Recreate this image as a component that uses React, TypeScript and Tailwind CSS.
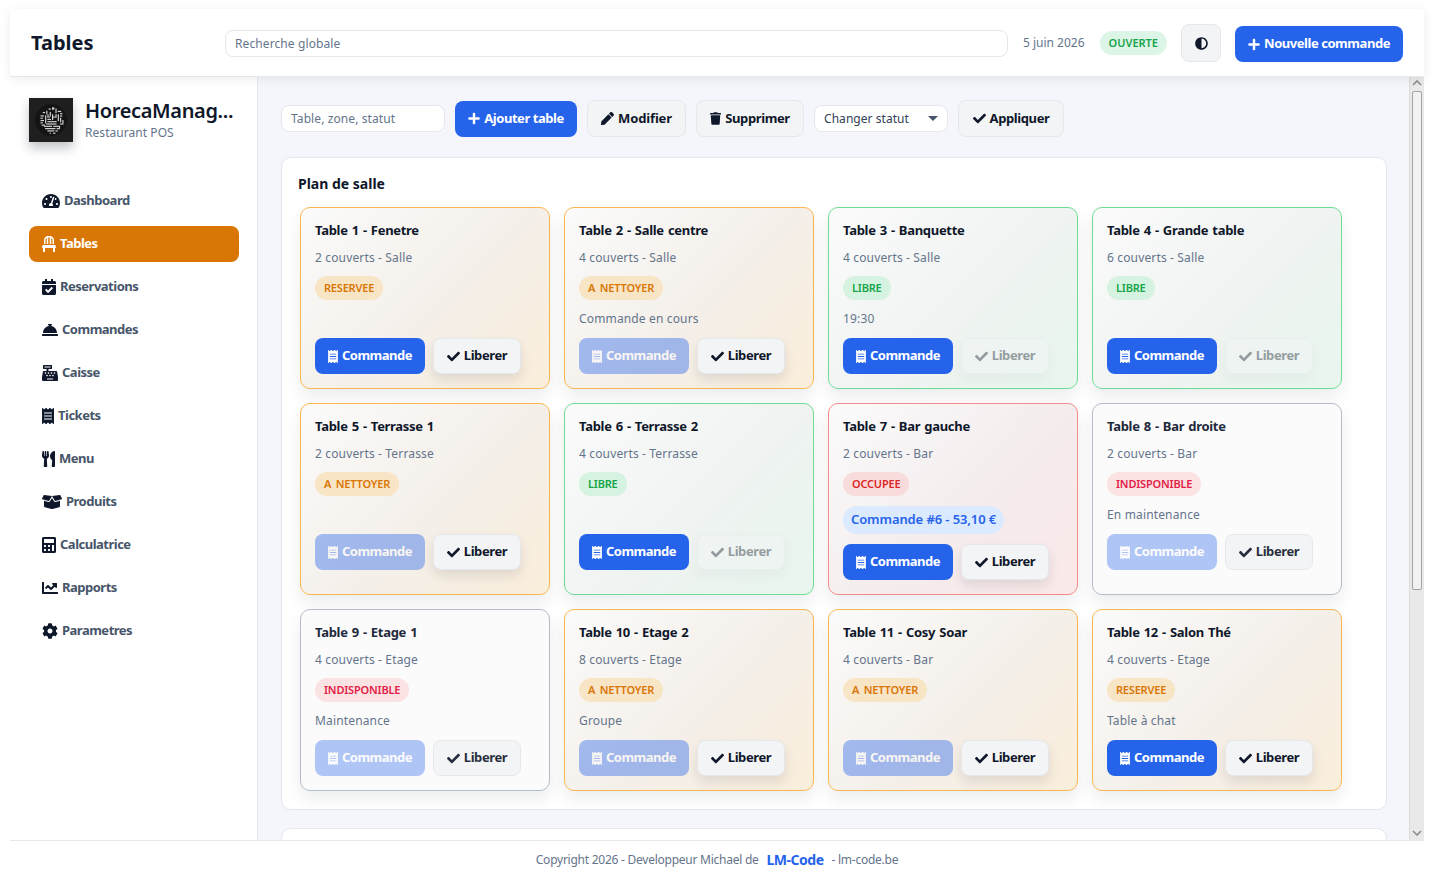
import {
  FaTachometerAlt,
  FaChair,
  FaCalendarCheck,
  FaConciergeBell,
  FaCashRegister,
  FaReceipt,
  FaUtensils,
  FaBoxOpen,
  FaCalculator,
  FaChartLine,
  FaCog,
  FaAdjust,
  FaPlus,
  FaPen,
  FaTrash,
  FaCheck,
} from 'react-icons/fa';

const navigation = [
  { name: 'Dashboard', icon: FaTachometerAlt, size: 'h-4 w-[18px]' },
  { name: 'Tables', icon: FaChair, size: 'h-4 w-[14px]', active: true },
  { name: 'Reservations', icon: FaCalendarCheck, size: 'h-4 w-[14px]' },
  { name: 'Commandes', icon: FaConciergeBell, size: 'h-4 w-4' },
  { name: 'Caisse', icon: FaCashRegister, size: 'h-4 w-4' },
  { name: 'Tickets', icon: FaReceipt, size: 'h-4 w-3' },
  { name: 'Menu', icon: FaUtensils, size: 'h-4 w-[13px]' },
  { name: 'Produits', icon: FaBoxOpen, size: 'h-4 w-5' },
  { name: 'Calculatrice', icon: FaCalculator, size: 'h-4 w-[14px]' },
  { name: 'Rapports', icon: FaChartLine, size: 'h-4 w-4' },
  { name: 'Parametres', icon: FaCog, size: 'h-4 w-4' },
];

type Status = 'RESERVEE' | 'A NETTOYER' | 'LIBRE' | 'OCCUPEE' | 'INDISPONIBLE';

const cardStyles: Record<Status, string> = {
  RESERVEE: 'border-[#fbb64f] bg-[linear-gradient(135deg,#fbfbfb_0%,#f4efe9_55%,#faeedb_100%)]',
  'A NETTOYER': 'border-[#fbb64f] bg-[linear-gradient(135deg,#fbfbfb_0%,#f4efe9_55%,#faeedb_100%)]',
  LIBRE: 'border-[#6fdc96] bg-[linear-gradient(135deg,#fbfbfb_0%,#eff3f1_55%,#e8f6ed_100%)]',
  OCCUPEE: 'border-[#f68a8a] bg-[linear-gradient(135deg,#fbfbfb_0%,#f4eced_55%,#fbe9e9_100%)]',
  INDISPONIBLE: 'border-[#b4bcc8] bg-[#fbfbfc]',
};

const badgeStyles: Record<Status, string> = {
  RESERVEE: 'bg-[#f8e5c6] text-[#d97706]',
  'A NETTOYER': 'bg-[#f8e5c6] text-[#d97706]',
  LIBRE: 'bg-[#d5f3e0] text-[#16a34a]',
  OCCUPEE: 'bg-[#f8dcdc] text-[#dc2626]',
  INDISPONIBLE: 'bg-[#fbe2e3] text-[#e11d48]',
};

interface TableData {
  name: string;
  zone: string;
  seats: string;
  status: Status;
  note?: string;
  order?: string;
  canOrder?: boolean;
}

const tables: TableData[] = [
  { name: 'Table 1', zone: 'Fenetre', seats: '2 couverts - Salle', status: 'RESERVEE', canOrder: true },
  { name: 'Table 2', zone: 'Salle centre', seats: '4 couverts - Salle', status: 'A NETTOYER', note: 'Commande en cours' },
  { name: 'Table 3', zone: 'Banquette', seats: '4 couverts - Salle', status: 'LIBRE', note: '19:30', canOrder: true },
  { name: 'Table 4', zone: 'Grande table', seats: '6 couverts - Salle', status: 'LIBRE', canOrder: true },
  { name: 'Table 5', zone: 'Terrasse 1', seats: '2 couverts - Terrasse', status: 'A NETTOYER' },
  { name: 'Table 6', zone: 'Terrasse 2', seats: '4 couverts - Terrasse', status: 'LIBRE', canOrder: true },
  { name: 'Table 7', zone: 'Bar gauche', seats: '2 couverts - Bar', status: 'OCCUPEE', order: 'Commande #6 - 53,10 €', canOrder: true },
  { name: 'Table 8', zone: 'Bar droite', seats: '2 couverts - Bar', status: 'INDISPONIBLE', note: 'En maintenance' },
  { name: 'Table 9', zone: 'Etage 1', seats: '4 couverts - Etage', status: 'INDISPONIBLE', note: 'Maintenance' },
  { name: 'Table 10', zone: 'Etage 2', seats: '8 couverts - Etage', status: 'A NETTOYER', note: 'Groupe' },
  { name: 'Table 11', zone: 'Cosy Soar', seats: '4 couverts - Bar', status: 'A NETTOYER' },
  { name: 'Table 12', zone: 'Salon Thé', seats: '4 couverts - Etage', status: 'RESERVEE', note: 'Table à chat', canOrder: true },
];

// speckled circuit mark of the logo
const logoMarks = [
  [14, 15, 2, 1], [17, 14, 1, 3], [19, 12, 2, 1], [22, 11, 2, 2], [25, 12, 1, 4], [27, 14, 3, 1],
  [29, 16, 2, 1], [12, 18, 3, 1], [12, 20, 2, 1], [12, 22, 3, 1], [12, 24, 2, 1], [13, 26, 3, 1],
  [16, 18, 1, 7], [18, 17, 1, 3], [20, 15, 1, 4], [22, 17, 1, 5], [23, 19, 2, 1], [25, 17, 1, 3],
  [27, 17, 1, 6], [29, 18, 2, 1], [29, 20, 1, 4], [31, 22, 1, 3], [29, 25, 3, 1], [18, 21, 3, 1],
  [18, 23, 8, 1], [17, 25, 9, 1], [15, 27, 7, 1], [23, 27, 5, 1], [16, 29, 9, 1], [26, 29, 3, 1],
  [18, 31, 6, 1], [25, 31, 2, 1], [20, 33, 1, 1], [23, 33, 2, 1], [19, 19, 1, 1], [28, 27, 1, 2],
];

function Logo() {
  return (
    <div className="w-11 h-11 shrink-0 bg-[#1f1f1f] shadow-[0_6px_10px_rgba(15,23,42,0.25)]">
      <svg viewBox="0 0 44 44" className="w-11 h-11">
        <circle cx="22" cy="22" r="16" fill="#141414" />
        <g fill="#d6d6d6" transform="translate(-2.3 -3.3) scale(1.15)">
          {logoMarks.map(([x, y, w, h], i) => (
            <rect key={i} x={x} y={y} width={w} height={h} />
          ))}
        </g>
      </svg>
    </div>
  );
}

function Sidebar() {
  return (
    <aside className="w-[248px] shrink-0 bg-white border-r border-[#e5e7eb] pl-[19px] pr-[18px] pt-[21px]">
      <div className="flex items-center gap-3 h-11">
        <Logo />
        <div className="min-w-0 flex-1">
          <p className="mb-[2px] text-[20px] leading-6 font-semibold tracking-[-0.35px] text-[#0f172a] whitespace-nowrap">HorecaManag...</p>
          <p className="text-[12px] leading-4 tracking-[0.05px] text-[#64748b]">Restaurant POS</p>
        </div>
      </div>
      <nav className="mt-[41px] flex flex-col gap-[7px]">
        {navigation.map((item) => (
          <a
            key={item.name}
            className={
              item.active
                ? 'flex items-center gap-1 h-9 pl-[13px] rounded-lg bg-[#d97706] text-white text-[13px] font-bold tracking-[-0.5px]'
                : 'flex items-center gap-1 h-9 pl-[13px] rounded-lg text-[#475569] text-[13px] font-bold tracking-[-0.5px]'
            }
          >
            <item.icon className={`${item.size} ${item.active ? 'text-white' : 'text-[#0f172a]'}`} />
            <span>{item.name}</span>
          </a>
        ))}
      </nav>
    </aside>
  );
}

function TableCard({ table }: { table: TableData }) {
  const muted = table.status === 'INDISPONIBLE';
  const free = table.status === 'LIBRE';
  return (
    <div className={`rounded-[10px] border p-[14px] shadow-[0_8px_16px_rgba(15,23,42,0.08)] ${cardStyles[table.status]}`}>
      <p className={`text-[13px] leading-4 font-bold tracking-[-0.3px] [word-spacing:1px] ${muted ? 'text-[#1e293b]' : 'text-[#0f172a]'}`}>
        {table.name} - {table.zone}
      </p>
      <p className="mt-[11px] text-[12px] leading-[18px] tracking-[0.15px] text-[#64748b]">{table.seats}</p>
      <span
        className={`mt-[9px] inline-flex items-center h-6 px-[9px] rounded-full text-[11px] font-semibold tracking-[-0.2px] [word-spacing:2px] ${badgeStyles[table.status]}`}
      >
        {table.status}
      </span>
      {table.order ? (
        <div className="mt-[10px] h-7">
          <span className="inline-flex items-center h-7 px-2 rounded-full bg-[#dbeafe] text-[#2563eb] text-[13px] font-semibold tracking-[-0.1px]">{table.order}</span>
        </div>
      ) : (
        <p className="mt-[10px] min-h-[18px] text-[12px] leading-[18px] tracking-[0.15px] text-[#64748b]">{table.note}</p>
      )}
      <div className="mt-[10px] flex gap-2">
        <button
          className={`flex items-center gap-1 h-9 w-[110px] justify-center rounded-lg bg-[#2563eb] text-white text-[13px] font-bold tracking-[-0.5px] ${
            table.canOrder ? '' : muted ? 'opacity-35' : 'opacity-40'
          }`}
        >
          <FaReceipt className="h-[13px] w-[10px]" />
          Commande
        </button>
        <button
          className={`flex items-center gap-1 h-9 w-[88px] justify-center rounded-lg border border-[#e5e7eb] bg-[#f3f4f6] text-[#0f172a] text-[13px] font-bold tracking-[-0.4px] ${
            free ? 'opacity-40 shadow-[0_6px_12px_rgba(15,23,42,0.08)]' : muted ? 'opacity-90' : 'shadow-[0_6px_12px_rgba(15,23,42,0.1)]'
          }`}
        >
          <FaCheck className="h-[13px] w-[13px]" />
          Liberer
        </button>
      </div>
    </div>
  );
}

function FakeScrollbar() {
  return (
    <div className="w-[15px] shrink-0 flex flex-col items-center pr-px bg-[#e9e9e9] border-l border-[#dcdcdc]">
      <svg viewBox="0 0 10 6" className="mt-[3px] w-[10px] h-[6px]">
        <path d="M1 5l4-4 4 4" fill="none" stroke="#8c8c8c" strokeWidth="1.6" />
      </svg>
      <div className="mt-[5px] w-[10px] h-[499px] rounded-[2px] border border-[#a3a3a3] bg-[#f1f1f1]" />
      <svg viewBox="0 0 10 6" className="mt-auto mb-1 w-[10px] h-[6px]">
        <path d="M1 1l4 4 4-4" fill="none" stroke="#8c8c8c" strokeWidth="1.6" />
      </svg>
    </div>
  );
}

export default function App() {
  return (
    <div className="h-screen overflow-hidden flex flex-col bg-white px-[10px] pt-[9px] font-['Noto_Sans',sans-serif]">
      {/* Header */}
      <header className="h-[68px] shrink-0 relative z-10 flex items-center bg-white border-b border-[#e5e7eb] pl-[21px] pr-[21px] pt-[1px] shadow-[0_2px_10px_rgba(15,23,42,0.08)]">
        <h1 className="w-[194px] shrink-0 text-[20px] font-bold text-[#0f172a]">Tables</h1>
        <input
          placeholder="Recherche globale"
          className="flex-1 h-[27px] px-[9px] rounded-lg border border-[#e5e7eb] bg-white text-[12px] tracking-[0.1px] text-[#475569] placeholder:text-[#64748b]"
        />
        <span className="ml-[15px] text-[12px] text-[#64748b]">5 juin 2026</span>
        <span className="ml-[15px] h-6 px-[9px] inline-flex items-center rounded-full bg-[#dcf5e6] text-[#16a34a] text-[11px] font-semibold">OUVERTE</span>
        <button className="ml-[14px] w-10 h-[38px] flex items-center justify-center rounded-lg border border-[#e5e7eb] bg-[#f3f4f6] text-[#0f172a]">
          <FaAdjust className="h-[13px] w-[13px]" />
        </button>
        <button className="ml-[14px] mt-[2px] h-9 w-[168px] flex items-center justify-center gap-1 rounded-lg bg-[#2563eb] text-white text-[13px] font-bold tracking-[-0.45px]">
          <FaPlus className="h-[13px] w-3" />
          Nouvelle commande
        </button>
      </header>

      <div className="flex-1 min-h-0 flex">
        <Sidebar />

        {/* Main content */}
        <main className="flex-1 min-w-0 overflow-hidden bg-[#f4f6fb] pl-[23px] pr-[22px] pt-[23px]">
          <div className="flex items-center gap-[10px] h-[37px]">
            <input
              placeholder="Table, zone, statut"
              className="w-[164px] h-[27px] px-[9px] rounded-lg border border-[#e5e7eb] bg-white text-[12px] tracking-[0.1px] placeholder:text-[#64748b]"
            />
            <button className="h-9 w-[122px] flex items-center justify-center gap-1 rounded-lg bg-[#2563eb] text-white text-[13px] font-bold tracking-[-0.45px]">
              <FaPlus className="h-[13px] w-3" />
              Ajouter table
            </button>
            <button className="h-[37px] w-[99px] flex items-center justify-center gap-1 rounded-lg border border-[#e5e7eb] bg-[#f3f4f6] text-[#0f172a] text-[13px] font-bold tracking-[-0.15px]">
              <FaPen className="h-[13px] w-[13px]" />
              Modifier
            </button>
            <button className="h-[37px] w-[108px] flex items-center justify-center gap-1 rounded-lg border border-[#e5e7eb] bg-[#f3f4f6] text-[#0f172a] text-[13px] font-bold tracking-[-0.4px]">
              <FaTrash className="h-[13px] w-[11px]" />
              Supprimer
            </button>
            <div className="w-[134px] h-[27px] flex items-center justify-between pl-[9px] pr-[9px] rounded-lg border border-[#e5e7eb] bg-white text-[12px] tracking-[0.05px] text-[#334155]">
              <span>Changer statut</span>
              <svg viewBox="0 0 10 5" className="w-[10px] h-[5px]">
                <path d="M0 0h10L5 5z" fill="#475569" />
              </svg>
            </div>
            <button className="h-[37px] w-[106px] flex items-center justify-center gap-1 rounded-lg border border-[#e5e7eb] bg-[#f3f4f6] text-[#0f172a] text-[13px] font-bold tracking-[-0.4px]">
              <FaCheck className="h-[13px] w-[13px]" />
              Appliquer
            </button>
          </div>

          <section className="mt-5 rounded-[10px] border border-[#e5e7eb] bg-white px-4 pt-4 pb-[18px]">
            <h2 className="text-[14px] leading-5 font-bold text-[#0f172a]">Plan de salle</h2>
            <div className="mt-[13px] ml-[2px] grid grid-cols-[repeat(4,250px)] gap-[14px]">
              {tables.map((table) => (
                <TableCard key={table.name} table={table} />
              ))}
            </div>
          </section>

          <section className="mt-[18px] h-40 rounded-[10px] border border-[#e5e7eb] bg-white" />
        </main>

        <FakeScrollbar />
      </div>

      {/* Footer */}
      <footer className="h-[39px] shrink-0 bg-white border-t border-[#e5e7eb] flex items-center justify-center gap-2 text-[12px] text-[#64748b]">
        <span className="tracking-[-0.25px]">Copyright 2026 - Developpeur Michael de</span>
        <span className="-mt-px text-[14px] font-bold tracking-[-0.5px] text-[#2563eb]">LM-Code</span>
        <span className="tracking-[-0.25px]">- lm-code.be</span>
      </footer>
    </div>
  );
}
